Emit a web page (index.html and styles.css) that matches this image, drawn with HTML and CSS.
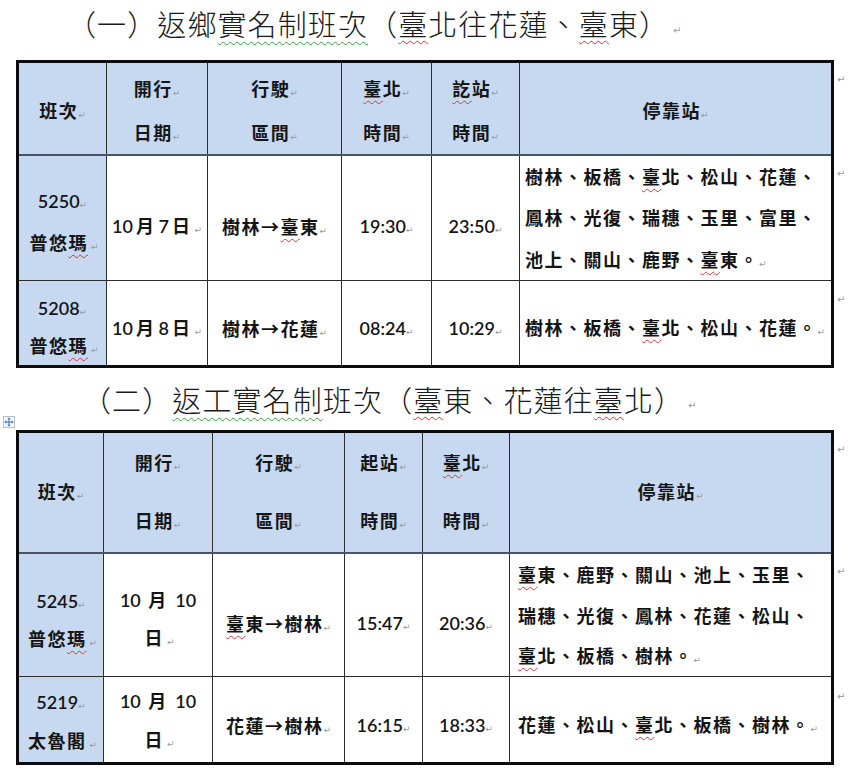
FILE: index.html
```html
<!DOCTYPE html>
<html lang="zh-Hant">
<head>
<meta charset="utf-8">
<title>實名制班次</title>
<link rel="stylesheet" href="styles.css">
</head>
<body>
<div class="page">
  <h1 class="title title-1">（一）返鄉<span class="gr">實名制班次</span>（<span class="sp">臺</span>北往花蓮、<span class="sp">臺</span>東）<span class="pm">↵</span></h1>

  <div class="tablewrap">
    <table class="sched s1">
      <colgroup>
        <col class="c1"><col class="c2"><col class="c3"><col class="c4"><col class="c5"><col class="c6">
      </colgroup>
      <tr class="hd">
        <th class="first">班次<span class="pm">↵</span></th>
        <th>開行<span class="pm">↵</span><br>日期<span class="pm">↵</span></th>
        <th>行駛<span class="pm">↵</span><br>區間<span class="pm">↵</span></th>
        <th><span class="sp">臺</span>北<span class="pm">↵</span><br>時間<span class="pm">↵</span></th>
        <th><span class="sp">訖</span>站<span class="pm">↵</span><br>時間<span class="pm">↵</span></th>
        <th>停靠站<span class="pm">↵</span></th>
      </tr>
      <tr class="r1">
        <td class="first num">5250<span class="pm">↵</span><br><span class="cjk">普悠<span class="sp">瑪</span></span><span class="pm">↵</span></td>
        <td class="num date">10<span class="cjk">月</span>7<span class="cjk">日</span><span class="pm">↵</span></td>
        <td class="cjk">樹林→<span class="sp">臺</span>東<span class="pm">↵</span></td>
        <td class="num">19:30<span class="pm">↵</span></td>
        <td class="num">23:50<span class="pm">↵</span></td>
        <td class="cjk stops">樹林、板橋、<span class="sp">臺</span>北、松山、花蓮、<br>鳳林、光復、瑞穗、玉里、富里、<br>池上、關山、鹿野、<span class="sp">臺</span>東。<span class="pm">↵</span></td>
      </tr>
      <tr class="r2">
        <td class="first num">5208<span class="pm">↵</span><br><span class="cjk">普悠<span class="sp">瑪</span></span><span class="pm">↵</span></td>
        <td class="num date">10<span class="cjk">月</span>8<span class="cjk">日</span><span class="pm">↵</span></td>
        <td class="cjk">樹林→花蓮<span class="pm">↵</span></td>
        <td class="num">08:24<span class="pm">↵</span></td>
        <td class="num">10:29<span class="pm">↵</span></td>
        <td class="cjk stops">樹林、板橋、<span class="sp">臺</span>北、松山、花蓮。<span class="pm">↵</span></td>
      </tr>
    </table>
    <div class="rowmarks rm-1">
      <div class="rm rm-hd1">↵</div>
      <div class="rm rm-r1">↵</div>
      <div class="rm rm-r2">↵</div>
    </div>
  </div>

  <h1 class="title title-2">（二）<span class="gr">返工實名制</span>班次（<span class="sp">臺</span>東、花蓮往<span class="sp">臺</span>北）<span class="pm">↵</span></h1>

  <div class="tablewrap tw2">
    <svg class="movehandle" width="12" height="12" viewBox="0 0 12 12" aria-hidden="true">
      <rect x="0.5" y="0.5" width="11" height="11" fill="#f4f6fa" stroke="#b9bfca"/>
      <path d="M6 2v8M2 6h8" stroke="#3b6fb6" stroke-width="1"/>
      <path d="M6 1.5l-1.6 1.8h3.2zM6 10.5l-1.6-1.8h3.2zM1.5 6l1.8-1.6v3.2zM10.5 6l-1.8-1.6v3.2z" fill="#3b6fb6"/>
    </svg>
    <table class="sched s2">
      <colgroup>
        <col class="d1"><col class="d2"><col class="d3"><col class="d4"><col class="d5"><col class="d6">
      </colgroup>
      <tr class="hd hd2">
        <th class="first">班次<span class="pm">↵</span></th>
        <th>開行<span class="pm">↵</span><br>日期<span class="pm">↵</span></th>
        <th>行駛<span class="pm">↵</span><br>區間<span class="pm">↵</span></th>
        <th>起站<span class="pm">↵</span><br>時間<span class="pm">↵</span></th>
        <th><span class="sp">臺</span>北<span class="pm">↵</span><br>時間<span class="pm">↵</span></th>
        <th>停靠站<span class="pm">↵</span></th>
      </tr>
      <tr class="r1">
        <td class="first num tight">5245<span class="pm">↵</span><br><span class="cjk">普悠<span class="sp">瑪</span></span><span class="pm">↵</span></td>
        <td class="num tight date">10 <span class="cjk">月</span> 10<br><span class="cjk">日</span><span class="pm">↵</span></td>
        <td class="cjk"><span class="sp">臺</span>東→樹林<span class="pm">↵</span></td>
        <td class="num">15:47<span class="pm">↵</span></td>
        <td class="num">20:36<span class="pm">↵</span></td>
        <td class="cjk stops stops2"><span class="sp">臺</span>東、鹿野、關山、池上、玉里、<br>瑞穗、光復、鳳林、花蓮、松山、<br><span class="sp">臺</span>北、板橋、樹林。<span class="pm">↵</span></td>
      </tr>
      <tr class="r2">
        <td class="first num tight">5219<span class="pm">↵</span><br><span class="cjk">太魯閣</span><span class="pm">↵</span></td>
        <td class="num tight date">10 <span class="cjk">月</span> 10<br><span class="cjk">日</span><span class="pm">↵</span></td>
        <td class="cjk">花蓮→樹林<span class="pm">↵</span></td>
        <td class="num">16:15<span class="pm">↵</span></td>
        <td class="num">18:33<span class="pm">↵</span></td>
        <td class="cjk stops stops2">花蓮、松山、<span class="sp">臺</span>北、板橋、樹林。<span class="pm">↵</span></td>
      </tr>
    </table>
    <div class="rowmarks rm-2">
      <div class="rm rm-hd2">↵</div>
      <div class="rm rm-r1">↵</div>
      <div class="rm rm-r2">↵</div>
    </div>
    <span class="resizehandle"></span>
  </div>
</div>
</body>
</html>
```

FILE: styles.css
```css
html, body {
  margin: 0;
  padding: 0;
  background: #ffffff;
}

body {
  font-family: "Lato", "Noto Sans CJK TC", sans-serif;
  color: #161616;
  text-spacing-trim: space-all;
}

.page {
  width: 859px;
  position: relative;
}

.title {
  margin: 0;
  font-family: "Noto Sans CJK TC", sans-serif;
  font-weight: 300;
  font-size: 29px;
  letter-spacing: 1.1px;
  color: #1a1a1a;
  display: flex;
  align-items: center;
  white-space: nowrap;
  box-sizing: border-box;
}

.title-1 {
  height: 60px;
  padding-left: 67px;
  padding-bottom: 14px;
}

.title-2 {
  height: 62px;
  padding-left: 82px;
  padding-top: 0;
}

.title .pm {
  font-size: 10px;
  margin-left: 4px;
  margin-top: 14px;
}

.gr {
  text-decoration: underline wavy #3aa13a;
  text-decoration-thickness: 1px;
  text-underline-offset: 5px;
}

.sp {
  text-decoration: underline wavy #d8343c;
  text-decoration-thickness: 1px;
  text-underline-offset: 4px;
}

.pm {
  font-family: "DejaVu Sans", sans-serif;
  font-size: 9px;
  font-weight: 400;
  color: #9a9a9a;
  letter-spacing: 0;
  text-decoration: none;
}

.tablewrap {
  display: flex;
  align-items: flex-start;
  padding-left: 16px;
  position: relative;
}

.sched {
  border-collapse: collapse;
  table-layout: fixed;
  width: 817px;
  border: 3px solid #0c0c0c;
}

.sched th,
.sched td {
  border: 1px solid #2e2e2e;
  padding: 0 4px;
  text-align: center;
  vertical-align: middle;
  font-size: 18px;
  overflow: hidden;
  white-space: nowrap;
}

.sched th span,
.sched td span {
  line-height: 0;
}

.sched th {
  font-family: "Noto Sans CJK TC", sans-serif;
  font-weight: 700;
  letter-spacing: 1.5px;
  background: #c6d9f1;
  line-height: 44px;
  border-bottom: 2px solid #4a5563;
}

.s1 .hd th {
  padding-top: 3px;
}

.sched .hd2 th {
  line-height: 58px;
  padding-bottom: 3px;
}

.sched td.first {
  background: #c6d9f1;
}

.cjk {
  font-family: "Noto Sans CJK TC", sans-serif;
  font-weight: 700;
  letter-spacing: 1.5px;
  color: #141414;
}

.num {
  font-family: "Lato", "Noto Sans CJK TC", sans-serif;
  font-weight: 600;
  font-size: 19px;
  letter-spacing: 0;
  color: #151515;
}

.sched td.num .cjk {
  margin: 0 3px;
  font-size: 18px;
}

.sched td.first {
  line-height: 42px;
}

.sched td.tight {
  line-height: 38px;
}

.sched td.stops {
  text-align: left;
  padding-left: 5px;
  line-height: 41.3px;
}

.sched td.stops2 {
  padding-left: 8px;
  line-height: 40.8px;
}

/* vertical offsets matching the reference cells */
.s1 .r1 td { padding-top: 16px; }
.s1 .r1 td.first { padding-top: 8px; }
.s1 .r1 td.stops { padding-top: 0; }

.s1 .r2 td { padding-top: 10px; }
.s1 .r2 td.first { padding-top: 8px; line-height: 38px; }

.s2 .r1 td { padding-top: 16px; }
.s2 .r1 td.first { padding-top: 9px; }
.s2 .r1 td.date { padding-top: 8px; }
.s2 .r1 td.stops { padding-top: 0; }

.s2 .r2 td { padding-top: 10px; }
.s2 .r2 td.first { padding-top: 5px; line-height: 39px; }
.s2 .r2 td.date { padding-top: 3px; line-height: 39px; }

.s1 .hd { height: 93px; }
.s1 .r1 { height: 124px; }
.s1 .r2 { height: 86px; }

.s2 .hd { height: 121px; }
.s2 .r1 { height: 123px; }
.s2 .r2 { height: 87px; }

.s1 .c1 { width: 89px; }
.s1 .c2 { width: 101px; }
.s1 .c3 { width: 134px; }
.s1 .c4 { width: 90px; }
.s1 .c5 { width: 88px; }
.s1 .c6 { width: 313px; }

.s2 .d1 { width: 86px; }
.s2 .d2 { width: 109px; }
.s2 .d3 { width: 132px; }
.s2 .d4 { width: 78px; }
.s2 .d5 { width: 87px; }
.s2 .d6 { width: 323px; }

.rowmarks {
  display: flex;
  flex-direction: column;
  padding-left: 3px;
}

.rm {
  font-family: "DejaVu Sans", sans-serif;
  font-size: 10px;
  color: #9a9a9a;
  padding-top: 14px;
  box-sizing: border-box;
}

.rm-1 .rm-hd1 { height: 94px; }
.rm-1 .rm-r1 { height: 126px; }
.rm-1 .rm-r2 { height: 86px; }

.rm-2 .rm-hd2 { height: 122px; }
.rm-2 .rm-r1 { height: 125px; }
.rm-2 .rm-r2 { height: 86px; }

.movehandle {
  position: absolute;
  left: 3px;
  top: -14px;
}

.resizehandle {
  position: absolute;
  left: 833px;
  bottom: -10px;
  width: 5px;
  height: 5px;
  border: 1px solid #a8a8a8;
}
```
